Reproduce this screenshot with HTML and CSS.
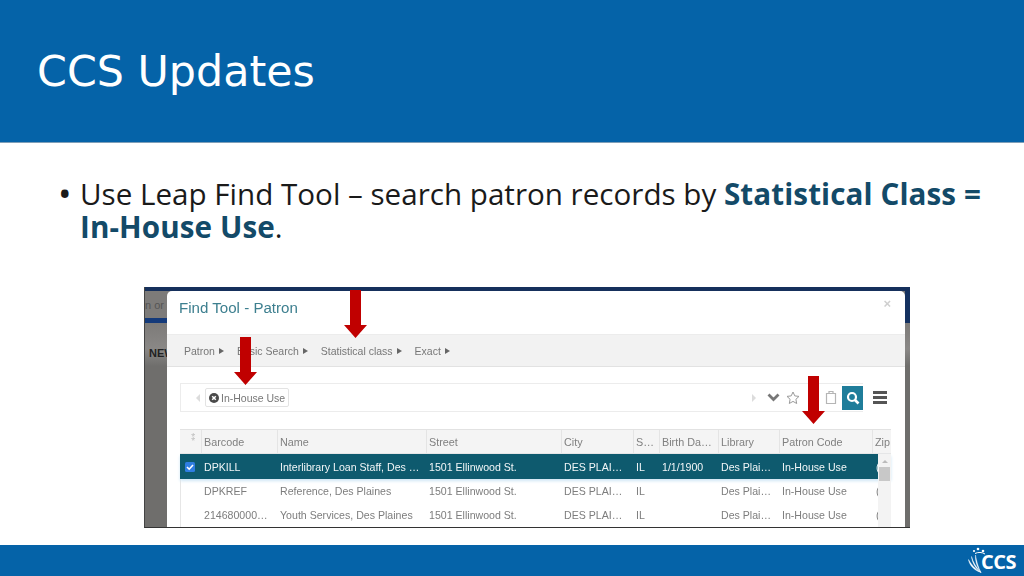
FILE: index.html
```html
<!DOCTYPE html>
<html lang="en">
<head>
<meta charset="utf-8">
<title>CCS Updates</title>
<link rel="stylesheet" href="styles.css">
</head>
<body>
<div class="slide">
  <header class="head"><h1>CCS Updates</h1></header>
  <main class="body">
    <ul class="bullets">
      <li>Use Leap Find Tool – search patron records by <strong>Statistical Class = In-House Use</strong>.</li>
    </ul>
    <div class="shot">
      <div class="backdrop">
        <div class="bd-top">n or s</div>
        <div class="bd-stripe"></div>
        <div class="bd-band">NEW</div>
      </div>
      <div class="dialog">
        <div class="d-title"><span>Find Tool - Patron</span><span class="close">×</span></div>
        <div class="crumbs">
          <span class="crumb">Patron</span>
          <span class="crumb">Basic Search</span>
          <span class="crumb">Statistical class</span>
          <span class="crumb">Exact</span>
        </div>
        <div class="searchrow">
          <div class="searchbar">
            <svg width="6" height="10" viewBox="0 0 6 10"><path d="M5 1 1 5l4 4z" fill="#dcdcdc"/></svg>
            <span class="chip">
              <svg width="10" height="10" viewBox="0 0 10 10"><circle cx="5" cy="5" r="5" fill="#4a4a4a"/><path d="M3.2 3.2l3.6 3.6M6.8 3.2 3.2 6.8" stroke="#fff" stroke-width="1.5"/></svg>
              In-House Use
            </span>
            <span class="spacer"></span>
            <svg width="6" height="10" viewBox="0 0 6 10"><path d="M1 1l4 4-4 4z" fill="#dcdcdc"/></svg>
            <svg class="chev" width="13" height="9" viewBox="0 0 13 9"><path d="M1.500 1.500 6.500 6.500l5-5" fill="none" stroke="#777" stroke-width="2.800"/></svg>
            <svg width="14" height="14" viewBox="0 0 14 14"><path d="M7 1l1.800 3.900 4.200.5-3.100 2.900.8 4.200L7 10.400 3.300 12.500l.8-4.200L1 5.400l4.200-.5z" fill="none" stroke="#9a9a9a"/></svg>
            <span class="gap"></span>
            <svg width="12" height="15" viewBox="0 0 12 15"><path d="M1.500 3.500h9v10h-9zM4 3.500V1.500h4v2" fill="none" stroke="#b5b5b5" stroke-width="1.200"/></svg>
            <span class="go"><svg width="14" height="14" viewBox="0 0 14 14"><circle cx="6" cy="6" r="4" fill="none" stroke="#fff" stroke-width="2.200"/><path d="M9 9l3.500 3.500" stroke="#fff" stroke-width="2.600"/></svg></span>
          </div>
          <div class="burger"><i></i><i></i><i></i></div>
        </div>
        <div class="grid">
          <div class="row hd">
            <span class="pin">⁑</span><span>Barcode</span><span>Name</span><span>Street</span><span>City</span><span>S…</span><span>Birth Da…</span><span>Library</span><span>Patron Code</span><span>Zip</span>
          </div>
          <div class="row sel">
            <span class="cb"><svg width="10" height="10" viewBox="0 0 10 10"><rect width="10" height="10" rx="1.500" fill="#2f7de1"/><path d="M2 5l2.200 2.200L8 3" fill="none" stroke="#fff" stroke-width="1.600"/></svg></span><span>DPKILL</span><span>Interlibrary Loan Staff, Des …</span><span>1501 Ellinwood St.</span><span>DES PLAI…</span><span>IL</span><span>1/1/1900</span><span>Des Plai…</span><span>In-House Use</span><span class="zip">(</span>
          </div>
          <div class="row">
            <span></span><span>DPKREF</span><span>Reference, Des Plaines</span><span>1501 Ellinwood St.</span><span>DES PLAI…</span><span>IL</span><span></span><span>Des Plai…</span><span>In-House Use</span><span class="zip">(</span>
          </div>
          <div class="row">
            <span></span><span>214680000…</span><span>Youth Services, Des Plaines</span><span>1501 Ellinwood St.</span><span>DES PLAI…</span><span>IL</span><span></span><span>Des Plai…</span><span>In-House Use</span><span class="zip">(</span>
          </div>
          <div class="scroll"><em></em><b></b></div>
        </div>
      </div>
      <svg class="arrow a1" width="23" height="48" viewBox="0 0 23 48"><path d="M6 0h11v35h6L11.500 48 0 35h6z" fill="#c00000"/></svg>
      <svg class="arrow a2" width="23" height="48" viewBox="0 0 23 48"><path d="M6 0h11v35h6L11.500 48 0 35h6z" fill="#c00000"/></svg>
      <svg class="arrow a3" width="23" height="48" viewBox="0 0 23 48"><path d="M6 0h11v35h6L11.500 48 0 35h6z" fill="#c00000"/></svg>
    </div>
  </main>
  <footer class="foot">
    <span class="logo">
      <svg class="swoosh" width="18" height="26" viewBox="0 0 18 26"><path d="M13 25.500C7 21 4 15 3.500 9.500C5 15 8 20 13 25.500ZM13 25.500C5 23 1 17 .5 12.500C3 17 7 22 13 25.500ZM13 25.500C9 20 7 14 7.500 8C8.500 14 10 20 13 25.500Z" fill="#fff" stroke="#fff" stroke-width=".4"/><circle cx="10" cy="2" r="1.300" fill="#fff"/><circle cx="15" cy="4" r="1.300" fill="#fff"/><circle cx="6" cy="4" r="1.100" fill="#fff"/><path d="M7 6.500c3-1.500 7-1.500 10 .5" fill="none" stroke="#fff"/></svg>
      <span>CCS</span>
    </span>
  </footer>
</div>
</body>
</html>
```
FILE: styles.css
```css
* { box-sizing: border-box; }
html, body { margin: 0; padding: 0; }
body { background: #fff; font-family: "Open Sans", sans-serif; }
.slide { width: 1024px; height: 576px; display: flex; flex-direction: column; overflow: hidden; }
.head { height: 143px; flex: none; background: #0563a8; border-bottom: 1px solid #7f9fb8; padding: 42px 0 0 37px; }
.head h1 { margin: 0; font-family: "DejaVu Sans", sans-serif; font-size: 42.800px; line-height: 58px; font-weight: 400; color: #fff; }
.body { flex: 1; display: flex; flex-direction: column; min-height: 0; }
.bullets { margin: 0; padding: 34px 30px 0 80px; list-style: none; height: 144px; }
.bullets li { position: relative; font-size: 29.600px; line-height: 33px; color: #1a1a1a; }
.bullets li::before { content: "•"; position: absolute; left: -22px; top: 0; font-size: 36px; }
.bullets strong { color: #134a68; font-weight: 700; letter-spacing: .1px; }
.shot { position: relative; width: 766px; height: 241px; margin-left: 144px; background: #6f6e6c; border-bottom: 1px solid #333; border-left: 1px solid #444; overflow: hidden; font-family: "Liberation Sans", Arial, sans-serif; }
.backdrop { position: absolute; inset: 0; border-top: 4px solid #16305c; color: #555; font-size: 11px; }
.bd-top { height: 27px; padding-top: 8px; background: #7d7b79; }
.bd-stripe { height: 5px; background: #143a7a; }
.bd-band { height: 43px; padding: 24px 0 0 4px; background: linear-gradient(#7d7b79, #8a8886 60%, #6f6e6c); color: #222; font-weight: 700; }
.backdrop::after { content: ""; position: absolute; right: 0; top: 0; width: 5px; height: 32px; background: #143160; }
.dialog { position: absolute; left: 22px; top: 4px; width: 738px; height: 240px; background: #fff; border-radius: 5px 5px 0 0; filter: blur(.35px); }
.d-title { height: 43px; padding: 8px 14px 0 12px; display: flex; justify-content: space-between; font-size: 15.100px; color: #3d7f8f; }
.close { color: #cfcfcf; font-size: 13px; font-weight: 700; margin-top: -3px; }
.crumbs { height: 33px; background: #f2f2f2; border-top: 1px solid #ececec; border-bottom: 1px solid #e2e2e2; padding-left: 17px; display: flex; align-items: center; gap: 13px; font-size: 10.500px; color: #777; }
.crumb { display: inline-flex; align-items: center; gap: 4px; }
.crumb::after { content: ""; border-left: 5px solid #666; border-top: 3.500px solid transparent; border-bottom: 3.500px solid transparent; }
.searchrow { display: flex; align-items: center; gap: 10px; margin: 16px 0 0 13px; }
.searchbar { width: 683px; height: 29px; border: 1px solid #ececec; border-right: 0; display: flex; align-items: center; padding-left: 14px; gap: 4px; }
.chip { display: inline-flex; align-items: center; gap: 2px; height: 19px; padding: 0 3px; border: 1px solid #e3e3e3; border-radius: 2px; font-size: 10.500px; color: #777; }
.spacer { flex: 1; }
.chev { margin: 0 2px 0 6px; }
.gap { width: 17px; }
.go { width: 21px; height: 24px; background: #1f7d9a; display: flex; align-items: center; justify-content: center; margin-left: 1px; }
.burger { width: 14px; display: flex; flex-direction: column; gap: 2px; }
.burger i { height: 3px; background: #555; }
.grid { position: relative; margin: 17px 0 0 13px; width: 711px; box-shadow: inset 1px 0 #e6e6e6; border-top: 1px solid #e2e2e2; }
.row { display: grid; grid-template-columns: 21px 76px 149px 135px 72px 26px 59px 61px 93px 19px; height: 24px; align-items: center; font-size: 10.600px; color: #7d7d7d; white-space: nowrap; overflow: hidden; }
.row > span { padding-left: 3px; overflow: hidden; }
.row > .zip { padding-left: 4px; }
.row.hd { height: 24px; background: #f4f4f4; border-bottom: 1px solid #e6e6e6; font-size: 10.800px; color: #808080; }
.row.hd > span { height: 100%; display: flex; align-items: center; border-left: 1px solid #e4e4e4; padding-left: 2px; }
.row.hd > .pin { border-left: 0; align-items: flex-start; font-size: 8px; color: #bbb; padding-left: 11px; }
.row.sel { height: 25px; background: #0e5a6e; color: #f2f6f7; box-shadow: 0 2px 3px #cfe6f5; position: relative; }
.cb { display: flex; align-items: center; padding-left: 5px !important; }
.scroll { position: absolute; right: 0; top: 24px; width: 13px; height: 74px; background: #f3f3f3; padding-top: 6px; z-index: 1; }
.scroll em { display: block; width: 0; height: 0; margin: 0 auto 4px; border: 3px solid transparent; border-top: 0; border-bottom: 3px solid #bbb; }
.scroll b { display: block; height: 14px; margin: 0 1px; background: #c8c8c8; }
.arrow { position: absolute; }
.a1 { left: 199px; top: 3px; }
.a2 { left: 89px; top: 50px; }
.a3 { left: 657px; top: 89px; }
.foot { height: 31px; flex: none; background: #0563a8; display: flex; justify-content: flex-end; position: relative; }
.logo { position: absolute; right: 8px; bottom: 3px; display: flex; align-items: flex-end; color: #fff; font: 700 20px/22px "Open Sans", sans-serif; letter-spacing: -.5px; }
.swoosh { margin-right: -5px; }
```
